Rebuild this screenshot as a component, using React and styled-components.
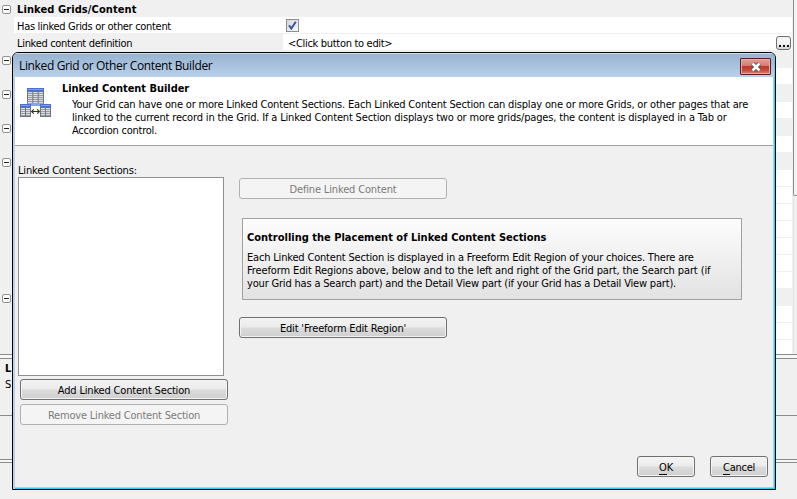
import React from 'react';
import styled, { createGlobalStyle } from 'styled-components';

const Global = createGlobalStyle`
  *, *::before, *::after { box-sizing: border-box; }
  body {
    margin: 0;
    overflow: hidden;
    background: #f0f0f0;
    color: #000;
    font: 11px/13px "DejaVu Sans Condensed", "DejaVu Sans", Tahoma, sans-serif;
  }
`;

const Screen = styled.div`
  position: relative;
  width: 797px;
  height: 499px;
  overflow: hidden;
  background: #f0f0f0;
`;

const Text = styled.span`
  white-space: nowrap;
  font-weight: ${(p) => (p.$bold ? 700 : 400)};
  letter-spacing: ${(p) => p.$track ?? (p.$bold ? 0 : -0.18)}px;
`;

/* ---- property sheet behind the dialog ---- */

const Sheet = styled.div`
  display: flex;
  height: 354px;
  overflow: hidden;
`;

const Rows = styled.div`
  width: 792px;
`;

const Row = styled.div`
  display: grid;
  grid-template-columns: 14px 269px 1fr;
  height: 17px;
`;

const Gutter = styled.div`
  display: flex;
  align-items: center;
  padding: 1px 0 0 2px;
`;

const Toggle = styled.span`
  display: flex;
  align-items: center;
  justify-content: center;
  width: 9px;
  height: 9px;
  border: 1px solid #929292;
  border-radius: 2px;
  background: #fbfbfb;
  &::before {
    content: "";
    width: 5px;
    height: 1px;
    background: #222;
  }
`;

const Cell = styled.div`
  display: flex;
  align-items: center;
  padding: 2px 0 0 ${(p) => p.$indent ?? 3}px;
  border-bottom: 1px solid #f0f0f0;
  background: ${(p) => (p.$shaded ? '#f0f0f0' : '#fff')};
`;

const ValueCell = styled(Cell)`
  justify-content: space-between;
`;

const CheckBox = styled.span`
  display: flex;
  width: 13px;
  height: 13px;
  margin: -1px 0 0 -2px;
  padding: 1px;
  border: 1px solid #8b8d90;
  background: linear-gradient(135deg, #d3d8de, #f8f8f8);
`;

const Ellipsis = styled.button`
  display: flex;
  justify-content: center;
  align-items: flex-end;
  gap: 2px;
  width: 15px;
  height: 14px;
  margin: 0 1px 0 0;
  padding: 0 0 2px;
  border: 1px solid #707070;
  border-radius: 3px;
  background: linear-gradient(#f4f4f4 50%, #d4d4d4);
`;

const Dot = styled.i`
  width: 2px;
  height: 2px;
  background: #111;
`;

const ScrollEdge = styled.div`
  flex: 1;
  background: #f0f0f0;
`;

const Thumb = styled.div`
  height: 196px;
  margin-left: 1px;
  border-left: 1px solid #8e8e8e;
  border-bottom: 1px solid #8e8e8e;
  border-bottom-left-radius: 2px;
  background: #f4f4f4;
`;

const Track = styled.div`
  height: 157px;
  margin-left: 1px;
  border-left: 1px solid #e2e2e2;
`;

const HelpPane = styled.div`
  display: flex;
  flex-direction: column;
  gap: 3px;
  height: 58px;
  padding: 3px 0 0 5px;
  border-top: 1px solid #8b8b8d;
  border-bottom: 1px solid #8b8b8d;
`;

const Splitter = styled.div`
  height: 4px;
  margin-top: ${(p) => p.$gap}px;
  border-top: 1px solid #8b8b8d;
  border-bottom: ${(p) => (p.$open ? '0' : '1px')} solid #8b8b8d;
  background: #f7f7f7;
`;

/* ---- dialog ---- */

const Dialog = styled.section`
  position: absolute;
  left: 12px;
  top: 52px;
  display: flex;
  flex-direction: column;
  width: 764px;
  height: 438px;
  overflow: hidden;
  border: 1px solid #000;
  border-radius: 6px 6px 0 0;
  background: #f0f0f0;
  box-shadow: inset 2px 0 #b9d1ea, inset -1px 0 #2fcbee, inset 0 -1px #2fcbee, inset -2px -2px #8fdcf0;
`;

const TitleBar = styled.header`
  display: flex;
  justify-content: space-between;
  height: 24px;
  padding: 4px 3px 0 6px;
  border-top: 1px solid #d2deeb;
  border-right: 1px solid #55d3f0;
  background: linear-gradient(#98b3d1, #b9d1ea);
`;

const Title = styled.span`
  font: 12px/16px "Open Sans", "Noto Sans", sans-serif;
  letter-spacing: -0.36px;
  white-space: nowrap;
`;

const CloseButton = styled.button`
  display: flex;
  align-items: center;
  justify-content: center;
  width: 31px;
  height: 17px;
  padding: 0;
  border: 1px solid #5b1c20;
  border-radius: 1px;
  background: linear-gradient(#e3a297 0%, #d6796d 48%, #bb3a2b 50%, #c84a39 75%, #d88475 100%);
  box-shadow: inset 0 0 0 1px #e6aaa0;
`;

const Banner = styled.div`
  display: flex;
  height: 69px;
  margin: 0 2px 0 2px;
  padding: 5px 0 0 5px;
  border-bottom: 1px solid #a0a0a0;
  background: #fff;
`;

const BannerIcon = styled.svg`
  width: 32px;
  height: 30px;
  margin: 6px 10px 0 0;
`;

const BannerText = styled.div`
  display: flex;
  flex-direction: column;
`;

const Paragraph = styled.div`
  display: flex;
  flex-direction: column;
  margin: ${(p) => p.$margin};
`;

const Body = styled.div`
  display: flex;
  gap: 11px;
  padding: 18px 0 0 5px;
`;

const SideColumn = styled.div`
  width: 210px;
`;

const ListBox = styled.div`
  width: 206px;
  height: 199px;
  border: 1px solid #8e9093;
  background: #fff;
`;

const Stack = styled.div`
  display: flex;
  flex-direction: column;
  gap: 4px;
  margin: 3px 0 0 2px;
`;

const MainColumn = styled.div`
  display: flex;
  flex-direction: column;
  padding-top: 14px;
`;

const Button = styled.button`
  display: flex;
  align-items: center;
  justify-content: center;
  width: ${(p) => p.$width ?? 208}px;
  height: 21px;
  padding: 1px 0 0;
  border: 1px solid #707070;
  border-radius: 3px;
  background: linear-gradient(#f3f3f3, #ebebeb 49%, #dcdcdc 51%, #cfcfcf);
  box-shadow: inset 0 0 0 1px #f4f4f4;
  color: #000;
  font: inherit;
  &:disabled {
    border-color: #b1b1b1;
    background: #f4f4f4;
    color: #7b7b7b;
  }
`;

const Key = styled.span`
  border-bottom: 1px solid #000;
`;

const InfoPanel = styled.div`
  width: 500px;
  height: 82px;
  margin: 19px 0 17px 3px;
  padding: 12px 0 0 4px;
  border: 1px solid #a0a0a0;
  background: linear-gradient(#fdfdfd, #e2e2e2);
`;

const Footer = styled.footer`
  display: flex;
  justify-content: flex-end;
  gap: 15px;
  margin: auto 7px 12px 0;
`;

const Checkmark = () => (
  <svg width="9" height="9" viewBox="0 0 9 9">
    <path d="M1 4.2 3.3 7.5 7.8.8" fill="none" stroke="#36549c" strokeWidth="2" />
  </svg>
);

const TableGlyph = ({ x, y, w, h, cols }) => (
  <g transform={`translate(${x} ${y})`}>
    <rect width={w} height={h} fill="#70747e" />
    <rect width={w} height="4" fill="#4e6fd6" />
    <rect x="1" y="1" width={w - 2} height="1" fill="#7f9bee" />
    {Array.from({ length: cols }, (_, c) => {
      const cw = (w - 1) / cols;
      return Array.from({ length: Math.floor((h - 4) / 2) }, (_, r) => (
        <rect key={`${c}-${r}`} x={1 + c * cw} y={4 + r * 2} width={cw - 1} height="1.4" fill="#dcdde2" />
      ));
    })}
  </g>
);

const sheetRows = Array.from({ length: 21 }, (_, i) => ({ group: [0, 3, 5, 7, 9, 17].includes(i) }));
sheetRows[0].name = <Text $bold $track={0.1}>Linked Grids/Content</Text>;
sheetRows[1].name = <Text $track={-0.31}>Has linked Grids or other content</Text>;
sheetRows[1].value = <CheckBox><Checkmark /></CheckBox>;
sheetRows[2].name = <Text $track={-0.31}>Linked content definition</Text>;
sheetRows[2].selected = true;
sheetRows[2].value = (
  <>
    <Text $track={-0.31}>&lt;Click button to edit&gt;</Text>
    <Ellipsis><Dot /><Dot /><Dot /></Ellipsis>
  </>
);

export default function App() {
  return (
    <Screen>
      <Global />
      <Sheet>
        <Rows>
          {sheetRows.map((row, i) => (
            <Row key={i}>
              <Gutter>{row.group && <Toggle />}</Gutter>
              <Cell $shaded={row.group || row.selected}>{row.name}</Cell>
              <ValueCell $shaded={row.group} $indent={5}>{row.value}</ValueCell>
            </Row>
          ))}
        </Rows>
        <ScrollEdge><Thumb /><Track /></ScrollEdge>
      </Sheet>
      <Splitter $gap={0} $open />
      <HelpPane>
        <Text $bold>L</Text>
        <Text>S</Text>
      </HelpPane>
      <Splitter $gap={43} />

      <Dialog>
        <TitleBar>
          <Title>Linked Grid or Other Content Builder</Title>
          <CloseButton aria-label="Close">
            <svg width="12" height="10" viewBox="0 0 12 10">
              <path d="M2.5 1.5 9.5 8.5M9.5 1.5 2.5 8.5" stroke="#5d4850" strokeWidth="4.4" />
              <path d="M2.5 1.5 9.5 8.5M9.5 1.5 2.5 8.5" stroke="#fff" strokeWidth="2.6" />
            </svg>
          </CloseButton>
        </TitleBar>
        <Banner>
          <BannerIcon viewBox="0 0 32 30">
            <TableGlyph x={7} y={0} w={17} h={16} cols={3} />
            <path d="M7 15h17v3H5v-1h2z" fill="#87a4e8" />
            <TableGlyph x={0} y={16} w={11} h={13} cols={2} />
            <TableGlyph x={20} y={16} w={11} h={13} cols={2} />
            <path d="M12 23.500h7M13.800 21.300l-2.200 2.200 2.200 2.200M17.200 21.300l2.200 2.200-2.200 2.200" fill="none" stroke="#333" strokeWidth="1.2" />
          </BannerIcon>
          <BannerText>
            <Text $bold $track={-0.04}>Linked Content Builder</Text>
            <Paragraph $margin="3px 0 0 10px">
              <Text>Your Grid can have one or more Linked Content Sections. Each Linked Content Section can display one or more Grids, or other pages that are</Text>
              <Text $track={-0.165}>linked to the current record in the Grid. If a Linked Content Section displays two or more grids/pages, the content is displayed in a Tab or</Text>
              <Text $track={-0.24}>Accordion control.</Text>
            </Paragraph>
          </BannerText>
        </Banner>
        <Body>
          <SideColumn>
            <Text>Linked Content Sections:</Text>
            <ListBox />
            <Stack>
              <Button><Text>Add Linked Content Section</Text></Button>
              <Button disabled><Text $track={-0.2}>Remove Linked Content Section</Text></Button>
            </Stack>
          </SideColumn>
          <MainColumn>
            <Button disabled><Text $track={-0.15}>Define Linked Content</Text></Button>
            <InfoPanel>
              <Text $bold>Controlling the Placement of Linked Content Sections</Text>
              <Paragraph $margin="7px 0 0">
                <Text>Each Linked Content Section is displayed in a Freeform Edit Region of your choices. There are</Text>
                <Text $track={-0.115}>Freeform Edit Regions above, below and to the left and right of the Grid part, the Search part (if</Text>
                <Text>your Grid has a Search part) and the Detail View part (if your Grid has a Detail View part).</Text>
              </Paragraph>
            </InfoPanel>
            <Button><Text>Edit 'Freeform Edit Region'</Text></Button>
          </MainColumn>
        </Body>
        <Footer>
          <Button $width={58}><Text><Key>O</Key>K</Text></Button>
          <Button $width={58}><Text $track={-0.25}><Key>C</Key>ancel</Text></Button>
        </Footer>
      </Dialog>
    </Screen>
  );
}
